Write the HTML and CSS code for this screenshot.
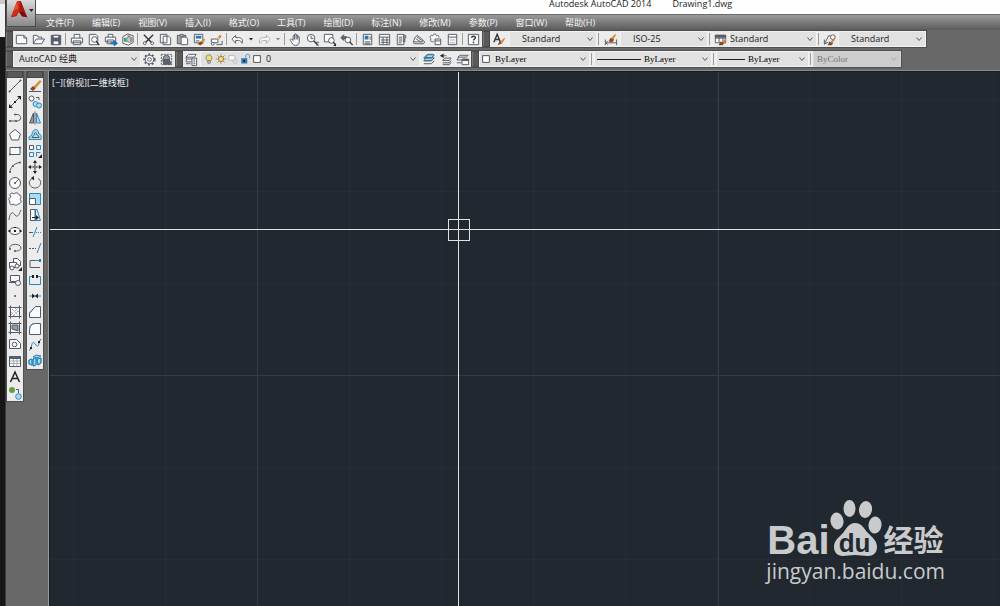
FILE: index.html
```html
<!DOCTYPE html>
<html lang="zh-CN">
<head>
<meta charset="utf-8">
<title>Autodesk AutoCAD 2014 - Drawing1.dwg</title>
<link rel="stylesheet" href="styles.css">
</head>
<body>
<svg class="sprite" aria-hidden="true">
  <symbol id="chev" viewBox="0 0 8 8"><path d="M1.500 2.500L4 5.500L6.500 2.500"/></symbol>
  <symbol id="caret" viewBox="0 0 8 8"><path class="k" d="M2 3h4L4 5.500z"/></symbol>
  <symbol id="new" viewBox="0 0 16 16"><path class="w" d="M2.500 3.500h8l3 3v6h-11zM10.500 3.500v3h3"/></symbol>
  <symbol id="open" viewBox="0 0 16 16"><path class="w" d="M2.500 12.500v-9h4l1 2h4v2M2.500 12.500l3-5h9l-3 5z"/></symbol>
  <symbol id="save" viewBox="0 0 16 16"><path class="g" d="M3.500 3.500h10v10h-10z"/><path class="w" d="M5.500 3.500h6v3h-6zM5.500 9.500h6v4h-6z"/></symbol>
  <symbol id="print" viewBox="0 0 16 16"><path class="w" d="M5.500 6.500v-4h6v4M2.500 6.500h12v5h-12zM4.500 9.500h8v4h-8z"/></symbol>
  <symbol id="preview" viewBox="0 0 16 16"><path class="w" d="M3.500 2.500h7l2 2v9h-9z"/><circle class="w" cx="9" cy="8" r="3"/><path class="b2" d="M11 10l3 4"/></symbol>
  <symbol id="publish" viewBox="0 0 16 16"><path class="w" d="M5.500 5.500v-3h5v3M2.500 5.500h11v5h-11zM4.500 8.500h7v4h-7z"/><path class="bl2" d="M8 12h6M11.500 9.500l3 2.500l-3 2.500"/></symbol>
  <symbol id="dwf" viewBox="0 0 16 16"><path class="w" d="M3 5l5-3l6 2v7l-5 3l-6-2z"/><path class="gr" d="M4 6h3v5l-3-1z"/><path class="or" d="M7 3l5 1l-3 2z"/><circle class="lb" cx="10" cy="8" r="3"/><path class="or" d="M10 6h3v4h-2z"/></symbol>
  <symbol id="cut" viewBox="0 0 16 16"><path class="b2" d="M3 3l8 8M13 3l-8 8"/><circle class="w" cx="4" cy="12" r="1.500"/><circle class="w" cx="12" cy="12" r="1.500"/></symbol>
  <symbol id="copy" viewBox="0 0 16 16"><path class="w" d="M2.500 2.500h7v9h-7zM5.500 4.500h6l2 2v7h-8z"/></symbol>
  <symbol id="paste" viewBox="0 0 16 16"><path class="t" d="M2.500 3.500h9v9h-9z"/><path class="w" d="M5.500 2.500h3v2h-3zM6.500 5.500h5l2 2v6h-7z"/></symbol>
  <symbol id="match" viewBox="0 0 16 16"><path class="w" d="M2.500 2.500h9v9h-9z"/><path class="bl" d="M4 4h6v3H4z"/><path d="M4 9.500h4"/><path class="or" d="M9 10l4-3l1 1l-2 4z"/><path class="br" d="M6 13l3-3l3 2l-3 2z"/></symbol>
  <symbol id="block" viewBox="0 0 16 16"><path class="w" d="M2.500 7.500h7v4h-7z"/><circle class="w" cx="4" cy="12.500" r="1.500"/><path d="M8 13.500h6v-4"/><path class="or" d="M12 2l-3 4h2l-1 3l4-5h-2z"/></symbol>
  <symbol id="undo" viewBox="0 0 16 16"><path class="w" d="M2 7.500l4-4v2.500h3c4 0 5 3 4 6c-1-2-2-3-4-3H6v3z"/></symbol>
  <symbol id="redo" viewBox="0 0 16 16"><path class="w dim" d="M14 7.500l-4-4v2.500H7c-4 0-5 3-4 6c1-2 2-3 4-3h3v3z"/></symbol>
  <symbol id="pan" viewBox="0 0 16 16"><path class="w" d="M5.500 9V4.500c0-1.500 1.500-1.500 1.500 0V3c0-1.500 1.700-1.500 1.700 0v1c0-1.500 1.700-1.500 1.700 0v1.500c0-1.300 1.600-1.300 1.600 0V10c0 3-1.500 4.500-4 4.500S4.500 12 2.500 9c-.8-1.500 1-2 1.800-1zM7 4.500V8M8.700 4V8M10.400 5V8"/></symbol>
  <symbol id="zoomrt" viewBox="0 0 16 16"><circle class="w" cx="6.500" cy="6.500" r="4"/><path d="M6.500 4v3h2.500M12 11h3M12 14h3"/><path class="b2" d="M9.500 9.500l4 4"/></symbol>
  <symbol id="zoomwin" viewBox="0 0 16 16"><path class="w" d="M2.500 2.500h9v8h-9z"/><circle class="w" cx="10" cy="9" r="3"/><path class="b2" d="M12 11l2 2"/><path class="k" d="M15 12v3h-3z"/></symbol>
  <symbol id="zoomprev" viewBox="0 0 16 16"><path class="g" d="M2 6l3-3v2h3v2H5v2z"/><circle class="w" cx="9.500" cy="8.500" r="3"/><path class="b2" d="M11.500 10.500l3 3.500"/></symbol>
  <symbol id="props" viewBox="0 0 16 16"><path class="w" d="M3.500 2.500h9v11h-9z"/><path class="bl" d="M5 4h4v4H5z"/><path d="M10 5.500h2M10 7.500h2M5 10.500h6M5 12h6"/></symbol>
  <symbol id="dcenter" viewBox="0 0 16 16"><path class="w" d="M2.500 2.500h11v11h-11zM2.500 5.500h11M6.500 5.500v8M10.500 5.500v8M4 8.500h9M4 11h9"/></symbol>
  <symbol id="palette" viewBox="0 0 16 16"><path class="w" d="M3.500 2.500h7v11h-7zM10.500 3.500h2v3h-2zM10.500 7.500h1v3h-1zM5 5.500h4M5 7.500h4M5 9.500h4M5 11.500h3"/></symbol>
  <symbol id="sheet" viewBox="0 0 16 16"><path class="w" d="M2.500 10.500l2-5l2-2l4 3l4 4l-1 2h-10zM5 7l6 4M6 5l7 5M3 10.500h10"/></symbol>
  <symbol id="markup" viewBox="0 0 16 16"><path class="w" d="M3 7c-2-3 1-4 2-3c1-3 4-2 4 0c3-1 3 1 2 2M3 7c-1 3 1 4 3 3"/><path class="w" d="M7.500 7.500h6v6h-6zM7.500 9.500h6"/></symbol>
  <symbol id="calc" viewBox="0 0 16 16"><path class="w" d="M3.500 2.500h9v11h-9zM3.500 5.500h9"/><path class="dim" d="M5 8.500h6M5 11.500h6"/></symbol>
  <symbol id="help" viewBox="0 0 16 16"><path class="w" d="M2.500 2.500h11v11h-11z"/><path class="b2" d="M6 6c0-2 4-2 4 0c0 1.500-2 1.500-2 3M8 10.500v1.500"/></symbol>
  <symbol id="textstyle" viewBox="0 0 16 16"><path class="b2" d="M2 11L5.500 2.500L9 11M3.500 8h4"/><path class="br" d="M6 14l2-4l3 2z"/><path class="or" d="M9 10l4-4l1 1l-3 5z"/></symbol>
  <symbol id="dimstyle" viewBox="0 0 16 16"><path d="M2.500 8v6M14.500 8v6M3 11.500h11M5 9.500l-2 2l2 2"/><path class="br" d="M6 10l2-4l4 2l-2 3z"/><path class="or" d="M9 6l4-4l1 1l-3 5z"/></symbol>
  <symbol id="tabstyle" viewBox="0 0 16 16"><path class="w" d="M2.500 3.500h11v8h-11zM2.500 6.500h11M6.500 6v5M10.500 6v5"/><path class="g" d="M2.500 3.500h11v2h-11z"/><path class="br" d="M6 14l2-4l4 2l-2 2z"/><path class="or" d="M10 10l3-3l1 1l-2 4z"/></symbol>
  <symbol id="mlstyle" viewBox="0 0 16 16"><path d="M3 12l4-8h2M2.500 8v5l4-2"/><circle class="w" cx="11.500" cy="5.500" r="2.500"/><path class="br" d="M6 14l2-4l4 2l-2 2z"/><path class="or" d="M9 10l4-3l1 1l-3 4z"/></symbol>
  <symbol id="gear" viewBox="0 0 16 16"><circle class="teeth" cx="8" cy="8" r="5.500"/><circle class="w" cx="8" cy="8" r="4.500"/><circle cx="8" cy="8" r="2"/></symbol>
  <symbol id="wsave" viewBox="0 0 16 16"><path class="dash" d="M2.500 2.500h11v11h-11z"/><circle class="gm" cx="8" cy="7" r="3.500"/><path class="g" d="M4 8h7l2 5H5z"/></symbol>
  <symbol id="layerprop" viewBox="0 0 16 16"><path class="w" d="M5 2.500h8l-2 3H2zM2 7.500h8M2 10.500h6M3 5l-1 2M3 8l-1 2M2 12.500h5"/><path class="w" d="M8.500 6.500h5v8h-5zM10 8.500h2M10 10.500h2M10 12.500h2"/></symbol>
  <symbol id="bulb" viewBox="0 0 16 16"><path class="ye" d="M6 10.500C2.500 7 4 2.500 8 2.500S13.500 7 10 10.500z"/><path class="w" d="M6.500 10.500h3v3h-3z"/></symbol>
  <symbol id="sun" viewBox="0 0 16 16"><path class="sr" d="M8 1v14M1 8h14M3 3l10 10M13 3L3 13"/><circle class="ye" cx="8" cy="8" r="3.500"/></symbol>
  <symbol id="vpf" viewBox="0 0 16 16"><path class="w dim" d="M2.500 3.500h8v6h-8z"/><circle class="w dim" cx="11" cy="11" r="3"/><circle class="dim" cx="11" cy="11" r="1"/></symbol>
  <symbol id="lock" viewBox="0 0 16 16"><path class="bs" d="M9 7V4c0-3 5-3 5 0v3"/><path class="bl" d="M3 7h8v7H3z"/><path class="k" d="M6 9h2v3H6z"/></symbol>
  <symbol id="swatch" viewBox="0 0 16 16"><path class="sw" d="M3.500 3.500h9v9h-9z"/></symbol>
  <symbol id="mkcur" viewBox="0 0 16 16"><path class="lb" d="M6 3h8l-3 3H3zM5 6h9l-3 3H3z"/><path d="M3 6.500h8l3-3M3 9.500h8l3-3M3 12.500h8l3-3M5 6l2-3.500h6"/></symbol>
  <symbol id="layprev" viewBox="0 0 16 16"><path class="k" d="M2 4l4-2.500v5z"/><path d="M6 4h3M7 6.500h7l-2 2.500H5zM5 11.500h7l2-2.500M5 13.500h7l2-2.500"/></symbol>
  <symbol id="laystate" viewBox="0 0 16 16"><path d="M5 3.500h9l-2 2H3zM2 8.500h6M4 5.500l-2 3M2 11.500h5"/><path class="w" d="M7.500 7.500h7v6h-7z"/><path class="g" d="M8 8h6v1H8z"/></symbol>
  <symbol id="line" viewBox="0 0 16 16"><path d="M3 13L13 3"/><path class="g" d="M2 13h1v1H2zM13 2h1v1h-1z"/></symbol>
  <symbol id="xline" viewBox="0 0 16 16"><path d="M3 13L13 3"/><path class="k" d="M2 14V10l4 4zM14 2v4l-4-4zM7 7h2v2H7z"/></symbol>
  <symbol id="pline" viewBox="0 0 16 16"><path d="M8 4.500h2c5 0 5 6.500 0 6.500H3"/><path class="g" d="M2.500 10.500h1v1h-1zM7.500 4h1v1h-1zM8.500 10.500h1v1h-1z"/></symbol>
  <symbol id="polygon" viewBox="0 0 16 16"><path class="w" d="M8 2.500l5.500 4.500l-2 6h-7l-2-6z"/></symbol>
  <symbol id="rect" viewBox="0 0 16 16"><path class="w" d="M3 4.500h10v7H3z"/><path class="g" d="M2.500 11h1v1h-1zM12.500 4h1v1h-1z"/></symbol>
  <symbol id="arc" viewBox="0 0 16 16"><path d="M3 13C3 9 7 4 13 3.500"/><path class="g" d="M2.500 12.500h1v1h-1zM5.500 6.500h1v1h-1zM12.500 3h1v1h-1z"/></symbol>
  <symbol id="circle" viewBox="0 0 16 16"><circle class="w" cx="8" cy="8" r="5.500"/><path d="M8 8l4-4"/><path class="g" d="M7.500 7.500h1v1h-1z"/></symbol>
  <symbol id="revcloud" viewBox="0 0 16 16"><path class="w" d="M4 6C1 3 5 1 7 3c2-2 5-1 5 1c3 0 2 3 1 4c2 2 1 5-2 5c-1 2-4 1-4 0c-3 2-5 0-4-3c-2-1-1-4 1-4z"/></symbol>
  <symbol id="spline" viewBox="0 0 16 16"><path d="M2 13c1-9 4-8 6-5s4 0 6-5"/></symbol>
  <symbol id="ellipse" viewBox="0 0 16 16"><ellipse class="w" cx="8" cy="8" rx="5.500" ry="3.500"/><path class="k" d="M7 7h2v2H7zM1.500 7h2v2h-2zM12.500 7h2v2h-2zM7 4h2v1H7z"/></symbol>
  <symbol id="earc" viewBox="0 0 16 16"><path d="M3 9C1 3 14 3 14 8c0 2-2 3-6 3"/><path class="g" d="M2.500 8.500h1v1h-1zM7.500 10.500h1v1h-1z"/></symbol>
  <symbol id="insert" viewBox="0 0 16 16"><path class="w" d="M6.500 2.500h4l3 3v4h-7z"/><path class="w" d="M2.500 6.500h7v5h-7z"/><circle class="w" cx="5" cy="12" r="2"/><circle class="w" cx="10" cy="10" r="2"/><path class="k" d="M15 11v4h-4z"/></symbol>
  <symbol id="mkblock" viewBox="0 0 16 16"><path class="w" d="M3.500 3.500h9v6h-9z"/><circle class="w" cx="11" cy="11" r="2.500"/><path d="M2 10.500h6"/></symbol>
  <symbol id="point" viewBox="0 0 16 16"><path class="g" d="M7.500 7.500h1v1h-1z"/></symbol>
  <symbol id="hatch" viewBox="0 0 16 16"><path class="w" d="M3.500 3.500h9v9h-9z"/><path class="dots" d="M5 5l6 6M8 4l4 4M4 8l4 4M4 11l7-7M6 12l6-6"/><path d="M1.500 3.500h13M1.500 12.500h13M3.500 1.500v13M12.500 1.500v13"/></symbol>
  <symbol id="gradient" viewBox="0 0 16 16"><path class="w" d="M3.500 3.500h9v9h-9z"/><path class="gm" d="M5 5h6v6l-6-2z"/><path d="M1.500 3.500h13M1.500 12.500h13M3.500 1.500v13M12.500 1.500v13"/></symbol>
  <symbol id="region" viewBox="0 0 16 16"><path class="w" d="M2.500 3.500h7l4 4v5h-11z"/><circle class="w" cx="7.500" cy="8.500" r="2.300"/></symbol>
  <symbol id="table" viewBox="0 0 16 16"><path class="w" d="M2.500 3.500h11v10h-11z"/><path class="dim" d="M3 8h10M3 10.500h10M6.500 6v7M10 6v7"/><path class="g" d="M2.500 3.500h11v2h-11z"/></symbol>
  <symbol id="mtext" viewBox="0 0 16 16"><path class="ak" d="M3.500 13L8 3L12.500 13M5 9.500h6"/></symbol>
  <symbol id="addsel" viewBox="0 0 16 16"><circle class="gr" cx="5" cy="5" r="3"/><circle class="lb" cx="11.500" cy="11.500" r="2.800"/><path d="M9 4.500h2.500V8"/></symbol>
  <symbol id="erase" viewBox="0 0 16 16"><path class="or" d="M6 9l7-7l1.500 1.500L8 11z"/><path class="br" d="M3 11l3-3l2.500 2.500L6 13z"/><path d="M2 13.500h12"/></symbol>
  <symbol id="ccopy" viewBox="0 0 16 16"><circle class="w" cx="4.500" cy="4.500" r="2.500"/><circle class="lb" cx="8.500" cy="10" r="2.500"/><circle class="lb" cx="12" cy="11.500" r="2.500"/><path d="M9 3.500h3V6"/></symbol>
  <symbol id="mirror" viewBox="0 0 16 16"><path class="gm" d="M6.500 3v10H2.500z"/><path class="lb" d="M9.500 3v10h4z"/><path d="M8 1.500v13"/></symbol>
  <symbol id="offset" viewBox="0 0 16 16"><path class="lb" d="M2 12.500V10l3-2c0-7 7-7 6.500-1.500C14 7 14.500 9 14 12.500z"/><path d="M5 10.500h7C12 8 10 9 9.500 7c0-2-2-2-2 0C7.500 9 5 9 5 10.500z"/></symbol>
  <symbol id="array" viewBox="0 0 16 16"><path class="w" d="M2.500 2.500h4v4h-4z"/><path class="bs" d="M9.500 2.500h4v4h-4zM2.500 9.500h4v4h-4zM9.500 13.500v-4h4"/><path class="k" d="M15 11v4h-4z"/></symbol>
  <symbol id="move" viewBox="0 0 16 16"><path d="M8 2.500v11M2.500 8h11"/><path class="k" d="M8 1l2 3H6zM8 15l2-3H6zM1 8l3-2v4zM15 8l-3-2v4z"/><path class="w" d="M7 7h2v2H7z"/></symbol>
  <symbol id="rotate" viewBox="0 0 16 16"><path d="M5 3.500C0 6.500 2.500 13 8 13s8-7 3-9.500"/><path class="k" d="M7 1v4.500L4 3z"/></symbol>
  <symbol id="scale" viewBox="0 0 16 16"><path class="lb" d="M2.500 2.500h11v11h-11z"/><path class="w" d="M2.500 7.500h6v6h-6z"/></symbol>
  <symbol id="stretch" viewBox="0 0 16 16"><path class="w" d="M3.500 2.500h5v11h-5z"/><path class="bs" d="M8 2.500h2l3.500 11H8z"/><path class="k" d="M9 8l3 2.500L9 13zM5 10h5v1H5z"/></symbol>
  <symbol id="trim" viewBox="0 0 16 16"><path d="M2 8.500h4"/><path class="bs" d="M10 3L6 13M9 8.500h1M11 8.500h1M13 8.500h1"/></symbol>
  <symbol id="extend" viewBox="0 0 16 16"><path d="M2 8.500h2M5 8.500h2M8 8.500h1"/><path class="bs" d="M14 3l-4 10"/></symbol>
  <symbol id="breakpt" viewBox="0 0 16 16"><path d="M9 4.500H3v7h10"/><path class="bs" d="M8 4.500h5"/><path class="bl" d="M12 3h2v3h-2z"/></symbol>
  <symbol id="brk" viewBox="0 0 16 16"><path class="bs" d="M5 4.500H2.500v8h11v-8H11"/><path class="k" d="M5 3h2v3H5zM9 3h2v3H9z"/></symbol>
  <symbol id="join" viewBox="0 0 16 16"><path class="bs" d="M2 8h12"/><path class="k" d="M5 5.500L8 8L5 10.500zM11 5.500L8 8l3 2.500z"/></symbol>
  <symbol id="chamfer" viewBox="0 0 16 16"><path class="w" d="M2.500 13.500V9l6-6.500h5v11z"/><path class="bs" d="M2.500 9l6-6.500"/></symbol>
  <symbol id="fillet" viewBox="0 0 16 16"><path class="w" d="M2.500 13.500V9c0-4 2-6.500 6-6.500h5v11z"/><path class="bs" d="M2.500 9c0-4 2-6.500 6-6.500"/></symbol>
  <symbol id="blend" viewBox="0 0 16 16"><path class="bs" d="M4 12c1-9 3-7 5-4s3 0 3-4"/><path d="M2.500 13.500L4 11M12 5l2-3"/><path class="k" d="M3 10h2v2H3zM11 4h2v2h-2z"/></symbol>
  <symbol id="explode" viewBox="0 0 16 16"><path class="lb" d="M2 7l3-1v6l-3-1zM6 6l3-1v7l-3 1zM6 4l3-2l5 1l-3 1.500zM10 6l4-1v5l-3 2z"/><path class="bs" d="M2 7l3-1v6l-3-1zM6 6l3-1v7l-3 1zM10 6l4-1v5l-3 2z"/></symbol>
</svg>

<div class="edge"></div>
<div class="app">
  <header class="top">
    <div class="title"><span>Autodesk AutoCAD 2014</span><span>Drawing1.dwg</span></div>
    <nav class="menu">
      <button>文件(F)</button><button>编辑(E)</button><button>视图(V)</button><button>插入(I)</button><button>格式(O)</button><button>工具(T)</button><button>绘图(D)</button><button>标注(N)</button><button>修改(M)</button><button>参数(P)</button><button>窗口(W)</button><button>帮助(H)</button>
    </nav>
    <button class="logo" aria-label="应用程序菜单">
      <svg class="logo-a" viewBox="0 0 20 20" aria-hidden="true"><path fill="#a81a10" d="M8 0h4l7 18l-6-1l-3-5l-3 5l-6 1z"/><path fill="#cf2d1c" d="M8 0h3l-1 12l-4 4l-5 2z"/><path fill="#7c0d08" d="M10 12l3 5l6 1l-4-6z"/><path fill="#e2523a" d="M8 0l-4 11l5-3z"/></svg>
      <svg class="logo-c" viewBox="0 0 6 4" aria-hidden="true"><path fill="#222" d="M0 0h6L3 4z"/></svg>
    </button>
  </header>

  <div class="bars">
    <div class="row">
      <div class="bar std">
        <i class="grip"></i>
        <button class="tb" aria-label="新建"><svg><use href="#new"/></svg></button><button class="tb" aria-label="打开"><svg><use href="#open"/></svg></button><button class="tb" aria-label="保存"><svg><use href="#save"/></svg></button>
        <i class="sep"></i>
        <button class="tb" aria-label="打印"><svg><use href="#print"/></svg></button><button class="tb" aria-label="打印预览"><svg><use href="#preview"/></svg></button><button class="tb" aria-label="发布"><svg><use href="#publish"/></svg></button><button class="tb" aria-label="三维DWF"><svg><use href="#dwf"/></svg></button>
        <i class="sep"></i>
        <button class="tb" aria-label="剪切"><svg><use href="#cut"/></svg></button><button class="tb" aria-label="复制"><svg><use href="#copy"/></svg></button><button class="tb" aria-label="粘贴"><svg><use href="#paste"/></svg></button><button class="tb" aria-label="特性匹配"><svg><use href="#match"/></svg></button><button class="tb" aria-label="块编辑器"><svg><use href="#block"/></svg></button>
        <i class="sep"></i>
        <button class="tb" aria-label="放弃"><svg><use href="#undo"/></svg></button><button class="drop" aria-label="放弃列表"><svg><use href="#caret"/></svg></button><button class="tb" aria-label="重做"><svg><use href="#redo"/></svg></button><button class="drop faded" aria-label="重做列表"><svg><use href="#caret"/></svg></button>
        <i class="sep"></i>
        <button class="tb" aria-label="平移"><svg><use href="#pan"/></svg></button><button class="tb" aria-label="实时缩放"><svg><use href="#zoomrt"/></svg></button><button class="tb" aria-label="窗口缩放"><svg><use href="#zoomwin"/></svg></button><button class="tb" aria-label="缩放上一个"><svg><use href="#zoomprev"/></svg></button>
        <i class="sep"></i>
        <button class="tb" aria-label="特性"><svg><use href="#props"/></svg></button><button class="tb" aria-label="设计中心"><svg><use href="#dcenter"/></svg></button><button class="tb" aria-label="工具选项板"><svg><use href="#palette"/></svg></button><button class="tb" aria-label="图纸集"><svg><use href="#sheet"/></svg></button><button class="tb" aria-label="标记集"><svg><use href="#markup"/></svg></button><button class="tb" aria-label="计算器"><svg><use href="#calc"/></svg></button>
        <i class="sep"></i>
        <button class="tb" aria-label="帮助"><svg><use href="#help"/></svg></button>
      </div>
      <div class="bar styles">
        <i class="grip"></i>
        <button class="tb wide" aria-label="文字样式"><svg><use href="#textstyle"/></svg></button>
        <label class="combo w88 in12"><select aria-label="文字样式列表"><option>Standard</option></select><svg class="chev"><use href="#chev"/></svg></label>
        <i class="sep"></i>
        <button class="tb wide" aria-label="标注样式"><svg><use href="#dimstyle"/></svg></button>
        <label class="combo w88 in12"><select aria-label="标注样式列表"><option>ISO-25</option></select><svg class="chev"><use href="#chev"/></svg></label>
        <i class="sep"></i>
        <button class="tb" aria-label="表格样式"><svg><use href="#tabstyle"/></svg></button>
        <label class="combo w88"><select aria-label="表格样式列表"><option>Standard</option></select><svg class="chev"><use href="#chev"/></svg></label>
        <i class="sep"></i>
        <button class="tb" aria-label="多重引线样式"><svg><use href="#mlstyle"/></svg></button>
        <label class="combo w88 in12"><select aria-label="多重引线样式列表"><option>Standard</option></select><svg class="chev"><use href="#chev"/></svg></label>
      </div>
    </div>
    <div class="row">
      <div class="bar">
        <i class="grip"></i>
        <label class="combo w128 in4"><select aria-label="工作空间"><option>AutoCAD 经典</option></select><svg class="chev"><use href="#chev"/></svg></label>
        <button class="tb" aria-label="工作空间设置"><svg><use href="#gear"/></svg></button><button class="tb" aria-label="我的工作空间"><svg><use href="#wsave"/></svg></button>
      </div>
      <div class="bar">
        <i class="grip"></i>
        <button class="tb" aria-label="图层特性管理器"><svg><use href="#layerprop"/></svg></button>
        <label class="combo w220 layer"><svg><use href="#bulb"/></svg><svg><use href="#sun"/></svg><svg><use href="#vpf"/></svg><svg><use href="#lock"/></svg><svg><use href="#swatch"/></svg><select aria-label="图层"><option>0</option></select><svg class="chev"><use href="#chev"/></svg></label>
        <button class="tb" aria-label="置为当前图层"><svg><use href="#mkcur"/></svg></button><button class="tb" aria-label="上一个图层"><svg><use href="#layprev"/></svg></button><button class="tb" aria-label="图层状态管理器"><svg><use href="#laystate"/></svg></button>
      </div>
      <div class="bar">
        <i class="grip"></i>
        <label class="combo serif w111"><svg class="sq"><use href="#swatch"/></svg><select aria-label="颜色"><option>ByLayer</option></select><svg class="chev"><use href="#chev"/></svg></label>
        <i class="sep"></i>
        <label class="combo serif w118"><i class="stroke long"></i><select aria-label="线型"><option>ByLayer</option></select><svg class="chev"><use href="#chev"/></svg></label>
        <i class="sep"></i>
        <label class="combo serif w92"><i class="stroke"></i><select aria-label="线宽"><option>ByLayer</option></select><svg class="chev"><use href="#chev"/></svg></label>
        <i class="sep"></i>
        <label class="combo serif w88 off"><select aria-label="打印样式" disabled><option>ByColor</option></select><svg class="chev"><use href="#chev"/></svg></label>
      </div>
    </div>
  </div>

  <main class="work">
    <aside class="dock">
      <div class="pal draw">
        <i class="cap"></i>
        <button aria-label="直线"><svg><use href="#line"/></svg></button><button aria-label="构造线"><svg><use href="#xline"/></svg></button><button aria-label="多段线"><svg><use href="#pline"/></svg></button><button aria-label="正多边形"><svg><use href="#polygon"/></svg></button><button aria-label="矩形"><svg><use href="#rect"/></svg></button><button aria-label="圆弧"><svg><use href="#arc"/></svg></button><button aria-label="圆"><svg><use href="#circle"/></svg></button><button aria-label="修订云线"><svg><use href="#revcloud"/></svg></button><button aria-label="样条曲线"><svg><use href="#spline"/></svg></button><button aria-label="椭圆"><svg><use href="#ellipse"/></svg></button><button aria-label="椭圆弧"><svg><use href="#earc"/></svg></button><button aria-label="插入块"><svg><use href="#insert"/></svg></button><button aria-label="创建块"><svg><use href="#mkblock"/></svg></button><button aria-label="点"><svg><use href="#point"/></svg></button><button aria-label="图案填充"><svg><use href="#hatch"/></svg></button><button aria-label="渐变色"><svg><use href="#gradient"/></svg></button><button aria-label="面域"><svg><use href="#region"/></svg></button><button aria-label="表格"><svg><use href="#table"/></svg></button><button aria-label="多行文字"><svg><use href="#mtext"/></svg></button><button aria-label="添加选定对象"><svg><use href="#addsel"/></svg></button>
      </div>
      <div class="pal modify">
        <i class="cap"></i>
        <button aria-label="删除"><svg><use href="#erase"/></svg></button><button aria-label="复制对象"><svg><use href="#ccopy"/></svg></button><button aria-label="镜像"><svg><use href="#mirror"/></svg></button><button aria-label="偏移"><svg><use href="#offset"/></svg></button><button aria-label="阵列"><svg><use href="#array"/></svg></button><button aria-label="移动"><svg><use href="#move"/></svg></button><button aria-label="旋转"><svg><use href="#rotate"/></svg></button><button aria-label="缩放"><svg><use href="#scale"/></svg></button><button aria-label="拉伸"><svg><use href="#stretch"/></svg></button><button aria-label="修剪"><svg><use href="#trim"/></svg></button><button aria-label="延伸"><svg><use href="#extend"/></svg></button><button aria-label="打断于点"><svg><use href="#breakpt"/></svg></button><button aria-label="打断"><svg><use href="#brk"/></svg></button><button aria-label="合并"><svg><use href="#join"/></svg></button><button aria-label="倒角"><svg><use href="#chamfer"/></svg></button><button aria-label="圆角"><svg><use href="#fillet"/></svg></button><button aria-label="光顺曲线"><svg><use href="#blend"/></svg></button><button aria-label="分解"><svg><use href="#explode"/></svg></button>
      </div>
    </aside>
    <section class="canvas">
      <div class="view">[−][俯视][二维线框]</div>
      <div class="cross-h"></div>
      <div class="cross-v"></div>
      <div class="pick"></div>
      <div class="mark">
        <div class="brand">
          <span class="bai">Bai</span>
          <span class="paw">
            <svg viewBox="0 0 52 56" aria-hidden="true"><g fill="#c9cacc"><ellipse cx="7" cy="21" rx="6.500" ry="8.500" transform="rotate(-8 7 21)"/><ellipse cx="19.500" cy="8.500" rx="6" ry="8.500"/><ellipse cx="35.500" cy="9.500" rx="6.500" ry="8.500" transform="rotate(10 35.500 9.500)"/><ellipse cx="45" cy="25" rx="6.500" ry="8.500" transform="rotate(6 45 25)"/><path d="M25 23c7 0 9 6 13 10c5 5 9 8 9 14c0 6-4 9-9 9c-5 0-8-1-13-1s-8 1-12 1c-6 0-9-4-9-9c0-6 4-9 8-13s6-11 13-11z"/></g></svg>
            <b>du</b>
          </span>
          <span class="jy">经验</span>
        </div>
        <div class="url">jingyan.baidu.com</div>
      </div>
    </section>
  </main>
</div>
</body>
</html>
```
FILE: styles.css
```css
* { box-sizing: border-box; }
html, body { height: 100%; }
body {
  margin: 0;
  display: flex;
  overflow: hidden;
  background: #686868;
  color: #1c1c1c;
  font: 9px/12px "Open Sans", "Noto Sans CJK SC", sans-serif;
}
button, select { font: inherit; color: inherit; border: 0; padding: 0; margin: 0; background: none; }
.sprite { position: absolute; width: 0; height: 0; }

/* icon paint */
svg { fill: none; stroke: #535a64; stroke-width: 1; display: block; }
.w { fill: #f8fafc; }
.g { fill: #59616c; }
.gm { fill: #959ba3; }
.k { fill: #222; stroke: none; }
.t { fill: #a8a59c; }
.bl { fill: #2f78b4; stroke: none; }
.lb { fill: #a9dcf2; stroke: #3288b8; }
.bs { stroke: #2d86bd; }
.bl2 { stroke: #1f6fb5; stroke-width: 2; }
.b2 { stroke: #30353c; stroke-width: 1.5; }
.gr { fill: #62a043; stroke: none; }
.or { fill: #d98a35; stroke: none; }
.br { fill: #8a4a20; stroke: none; }
.ye { fill: #f6d873; stroke: #77704e; }
.sr { stroke: #a5853a; }
.sw { fill: #fff; stroke: #222; }
.ak { stroke: #222; stroke-width: 1.5; }
.dim { stroke: #a9adb2; }
.teeth { stroke-width: 2; stroke-dasharray: 2 2; }
.dash { stroke-dasharray: 2 1; }
.dots { stroke: #8c9299; stroke-dasharray: 1 1; }

/* frame */
.edge { flex: 0 0 6px; background: linear-gradient(#c9c9c9 4px, #f1f1f1 4px 37px, #171717 37px); border-right: 1px solid #3a3a3a; }
.app { flex: 1; min-width: 0; display: flex; flex-direction: column; }

.top { position: relative; }
.title {
  display: flex;
  gap: 21px;
  height: 14px;
  padding-left: 543px;
  background: #fefefe;
  line-height: 8px;
  white-space: nowrap;
}
.menu {
  display: flex;
  gap: 18px;
  height: 16px;
  padding-left: 40px;
  border-top: 1px solid #6c6c6c;
  background: linear-gradient(#9a9a9a, #5b5b5b);
  color: #f4f4f4;
  white-space: nowrap;
}
.logo {
  position: absolute;
  top: 0;
  left: 0;
  width: 30px;
  height: 27px;
  display: flex;
  align-items: center;
  gap: 1px;
  padding: 0 1px 6px 3px;
  border: 1px solid #4c4c4c;
  border-top: 0;
  background: linear-gradient(#dadada, #8a8a8a);
}
.logo svg { stroke: none; }
.logo-a { width: 19px; height: 20px; }
.logo-c { width: 5px; height: 3px; }

/* toolbars */
.bars { display: flex; flex-direction: column; gap: 2px; padding-bottom: 2px; border-bottom: 1px solid #8b8b8b; }
.row { display: flex; height: 18px; }
.bar { display: flex; align-items: stretch; background: #ececec; border: 1px solid #4f4f4f; border-left: 0; }
.grip { width: 7px; background: #5a5a5a; border: 1px solid #484848; border-left-color: #777; }
.tb { width: 17px; display: grid; place-items: center; }
.tb svg { width: 15px; height: 15px; }
.tb.wide { width: 19px; }
.drop { width: 10px; display: grid; place-items: center; }
.drop svg { width: 8px; height: 8px; }
.faded { opacity: .5; }
.sep { width: 4px; margin-top: 2px; margin-bottom: 2px; background: linear-gradient(90deg, transparent 1px, #9b9b9b 1px 2px, transparent 2px); }

.combo { display: flex; align-items: center; background: #e1e1e1; padding-right: 2px; border: 1px solid #f3f3f3; }
.combo select { flex: 1; min-width: 0; height: 14px; appearance: none; line-height: 14px; }
.combo svg { width: 12px; height: 12px; flex: none; }
.combo .chev { width: 8px; height: 8px; pointer-events: none; }
.in4 { padding-left: 5px; }
.in12 { padding-left: 12px; }
.w88 { width: 88px; }
.w92 { width: 93px; }
.w111 { width: 111px; }
.w118 { width: 118px; }
.w128 { width: 128px; }
.w220 { width: 220px; }
.layer { padding-left: 2px; }
.layer select { padding-left: 3px; }
.serif { font-family: "Liberation Serif", serif; }
.serif select { padding-left: 3px; color: #000; }
.stroke { width: 26px; height: 1px; margin-left: 2px; background: #222; }
.stroke.long { width: 44px; }
.off { background: #cdcdcd; border-color: #d5d5d5; }
.off select { color: #777; opacity: 1; }
.off .chev { opacity: .3; }

/* work area */
.work { flex: 1; min-height: 0; display: flex; }
.dock { flex: none; width: 43px; display: flex; align-items: flex-start; gap: 2px; border-right: 1px solid #9b9b9b; }
.pal {
  width: 18px;
  display: flex;
  flex-direction: column;
  justify-content: space-between;
  align-items: center;
  background: #ececec;
  border: 1px solid #4f4f4f;
  border-top: 0;
}
.draw { min-height: 331px; }
.modify { min-height: 299px; }
.cap { width: 16px; height: 7px; background: #5a5a5a; border: 1px solid #484848; }
.pal svg { width: 16px; height: 16px; }

.canvas {
  position: relative;
  flex: 1;
  overflow: hidden;
  border-top: 1px solid #171c22;
  border-left: 1px solid #171c22;
  background:
    linear-gradient(90deg, #343c46 1px, transparent 1px) 207px 0 / 461px 100%,
    linear-gradient(#343c46 1px, transparent 1px) 0 303px / 100% 461px,
    linear-gradient(90deg, #262d36 1px, transparent 1px) 23px 0 / 92px 100%,
    linear-gradient(#262d36 1px, transparent 1px) 0 27px / 100% 92px,
    #212830;
}
.view { padding: 5px 2px; color: #f0f0f0; }
.cross-h { position: absolute; left: 0; right: 0; top: 157px; height: 1px; background: #e2e2e2; }
.cross-v { position: absolute; top: 0; bottom: 0; left: 408px; width: 1px; background: #e2e2e2; }
.pick { position: absolute; left: 398px; top: 147px; width: 22px; height: 22px; border: 1px solid #e2e2e2; }

.mark { position: absolute; right: 55px; bottom: 20px; color: #c9cacc; white-space: nowrap; }
.brand { display: flex; align-items: flex-end; height: 56px; }
.bai { padding-left: 1px; font: bold 40px/32px "Liberation Sans", sans-serif; }
.paw { position: relative; width: 52px; height: 56px; }
.paw svg { width: 52px; height: 56px; stroke: none; }
.paw b { position: absolute; left: 0; right: 2px; bottom: 0; text-align: center; color: #212830; font: bold 26px/26px "Liberation Sans", sans-serif; }
.jy { padding-left: 2px; padding-bottom: 2px; font: bold 30px/32px "Noto Sans CJK SC", sans-serif; }
.url { font: 21px/30px "Open Sans", sans-serif; }
```
